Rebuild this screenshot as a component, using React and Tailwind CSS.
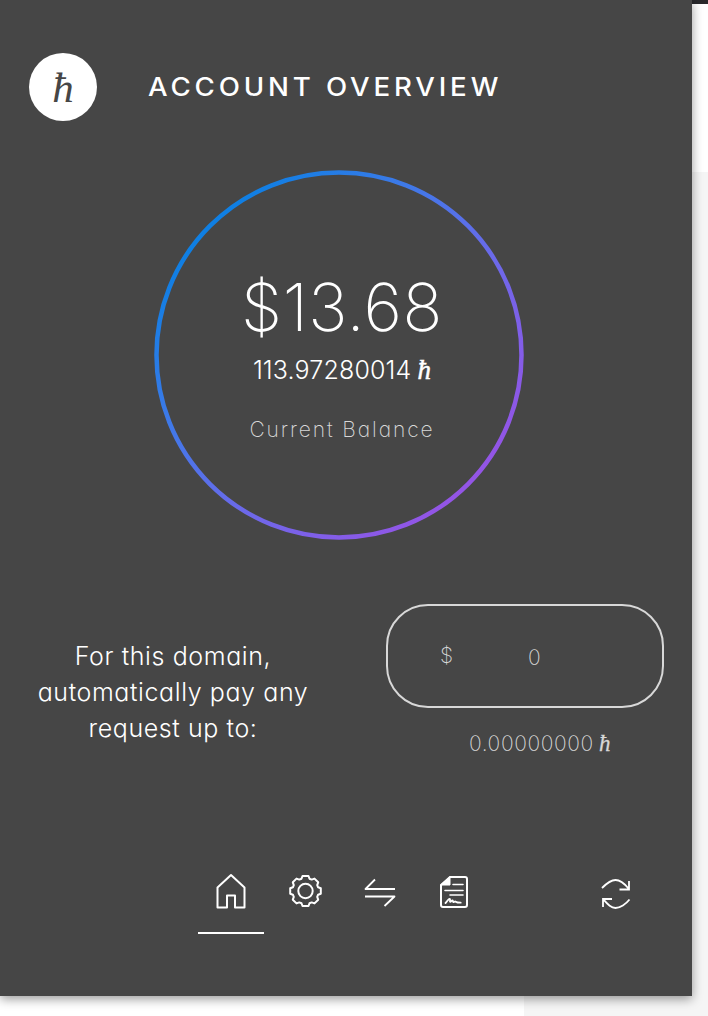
import React, { useState } from "react";

const TABS = [
  { id: "home", Icon: HomeIcon },
  { id: "settings", Icon: GearIcon },
  { id: "transfers", Icon: TransferIcon },
  { id: "contracts", Icon: ContractIcon },
];

const Hbar = ({ className = "" }) => (
  <span className={`font-['Liberation_Serif',serif] italic ${className}`}>ħ</span>
);

function HomeIcon() {
  return (
    <svg width="34" height="38" viewBox="0 0 34 38" fill="none" stroke="white" strokeWidth="2" strokeLinejoin="round">
      <path d="M3.500 35.500V15.500L17 3l13.500 12.500v20H21V23.500h-8v12Z" />
    </svg>
  );
}

function GearIcon() {
  return (
    <svg width="34" height="38" viewBox="0 0 34 38" fill="none" stroke="white" strokeWidth="2" strokeLinejoin="round">
      <path d="M13.500 4h6l1 2.700 2.200.9 2.800-1 3.700 3.700-1 2.800.9 2.200 2.700 1v5.400l-2.700 1-.9 2.200 1 2.800-3.700 3.700-2.800-1-2.200.9-1 2.700h-6l-1-2.700-2.200-.9-2.800 1-3.700-3.700 1-2.800-.9-2.200-2.700-1v-5.400l2.700-1 .9-2.200-1-2.800 3.700-3.700 2.800 1 2.200-.9Z" />
      <circle cx="16.500" cy="19" r="7.200" />
    </svg>
  );
}

function TransferIcon() {
  return (
    <svg width="34" height="38" viewBox="0 0 34 38" fill="none" stroke="white" strokeWidth="1.800" strokeLinejoin="round">
      <path d="M11 7.500 1.500 17H31M1 24.500h29.500L20.500 34" />
    </svg>
  );
}

function ContractIcon() {
  return (
    <svg width="34" height="38" viewBox="0 0 34 38" fill="none" stroke="white" strokeWidth="2" strokeLinejoin="round" strokeLinecap="round">
      <path d="M11 5h15a2 2 0 0 1 2 2v26a2 2 0 0 1-2 2H4a2 2 0 0 1-2-2V13Z" />
      <path d="M11 5v8H2Z" fill="white" strokeWidth="1" />
      <path d="M14 12.500h10M6 18.500h18M11 23h13" strokeWidth="1.600" />
      <path d="M6.500 31c2-2 3-4.500 4.200-4.200s-.5 3.400.8 3c1-.3 1.200-1.600 2-1.400s.3 1.900 1.200 1.700 1.200-1 2-.4 2.500 1 5 1" strokeWidth="1.800" />
    </svg>
  );
}

const RefreshIcon = () => (
  <svg width="34" height="38" viewBox="0 0 34 38" fill="none" stroke="white" strokeWidth="1.800">
    <path d="M3 16C7 12 12 8 16.500 8S25 11 29.500 16.500M30 9v8.500h-9.500M30.500 27.500C27 32 21 36 16.500 36S9 32.500 4 27M4 35V27h9" />
  </svg>
);

const BalanceRing = ({ usd, hbars }) => (
  <div className="relative ml-[154px] mt-[49px] h-[370px] w-[370px]">
    <svg className="absolute inset-0" width="370" height="370" viewBox="0 0 370 370">
      <defs>
        <linearGradient id="ring" x1="0.15" y1="0.15" x2="0.85" y2="0.85">
          <stop offset="0" stopColor="#0f7fe3" />
          <stop offset="0.3" stopColor="#3f79e8" />
          <stop offset="0.6" stopColor="#6a6aea" />
          <stop offset="1" stopColor="#9355e6" />
        </linearGradient>
      </defs>
      <circle cx="185" cy="185" r="182.500" fill="none" stroke="url(#ring)" strokeWidth="4.500" />
    </svg>
    <div className="flex flex-col items-center whitespace-nowrap pl-[6px] pt-[95px]">
      <div className="text-[66px] font-extralight leading-[84px] tracking-[0.500px]">{usd}</div>
      <div className="mt-[6px] text-[25px] font-light leading-[30px] tracking-[0.150px]">
        {hbars}
        <Hbar className="ml-[6px] text-[27px] leading-none [-webkit-text-stroke:0.500px_white]" />
      </div>
      <div className="mt-[31px] text-[21px] font-extralight leading-[28px] tracking-[1.900px] text-[#d8d8d8]">
        Current Balance
      </div>
    </div>
  </div>
);

const PaymentLimit = () => (
  <div className="mt-16 flex">
    <p className="ml-[23px] mt-[34px] w-[300px] whitespace-nowrap text-center text-[25px] font-light leading-9 tracking-[0.600px]">
      For this domain,
      <br />
      automatically pay any
      <br />
      request up to:
    </p>
    <div className="ml-[63px] w-[278px] text-[#d8d8d8]">
      <div className="flex h-[104px] items-center rounded-[42px] border-2 border-[#d8d8d8] pl-[52px] text-[21px] font-extralight">
        <span>$</span>
        <span className="ml-[75px] pt-[3px]">0</span>
      </div>
      <div className="mt-[24px] whitespace-nowrap pl-[30px] text-center text-[21px] font-extralight leading-6 tracking-[0.600px]">
        0.00000000
        <Hbar className="ml-[5px] text-[23px] leading-none [-webkit-text-stroke:0.300px_#d8d8d8]" />
      </div>
    </div>
  </div>
);

const App = () => {
  const [active, setActive] = useState("home");

  return (
    <div className="relative h-[1016px] w-[708px] overflow-hidden bg-[#f5f5f5] font-[Inter,sans-serif] text-white [font-feature-settings:'cv11']">
      <div className="h-1 bg-[#29292c]" />
      <div className="h-[168px] bg-white" />
      <div className="h-[844px] w-[524px] bg-white" />

      <div className="absolute left-0 top-0 flex h-[996px] w-[692px] flex-col bg-[#464646] shadow-[0_3px_10px_rgba(0,0,0,0.4)]">
        <header className="flex items-center pl-[29px] pt-[53px]">
          <div className="flex h-[68px] w-[68px] items-center justify-center rounded-full bg-white text-[#464646]">
            <Hbar className="text-[43px] leading-none" />
          </div>
          <h1 className="ml-[51px] origin-left scale-x-[1.105] whitespace-nowrap pt-[2px] text-[25px] font-medium tracking-[3.500px]">
            ACCOUNT OVERVIEW
          </h1>
        </header>

        <BalanceRing usd="$13.68" hbars="113.97280014" />
        <PaymentLimit />

        <nav className="mt-auto flex h-[124px] items-start pl-[198px]">
          {TABS.map(({ id, Icon }) => (
            <button
              key={id}
              onClick={() => setActive(id)}
              className={`mr-[9px] flex h-[62px] w-[66px] justify-center border-b-2 ${
                active === id ? "border-white" : "border-transparent"
              }`}
            >
              <Icon />
            </button>
          ))}
          <button className="ml-[101px]">
            <RefreshIcon />
          </button>
        </nav>
      </div>
    </div>
  );
};

export default App;
